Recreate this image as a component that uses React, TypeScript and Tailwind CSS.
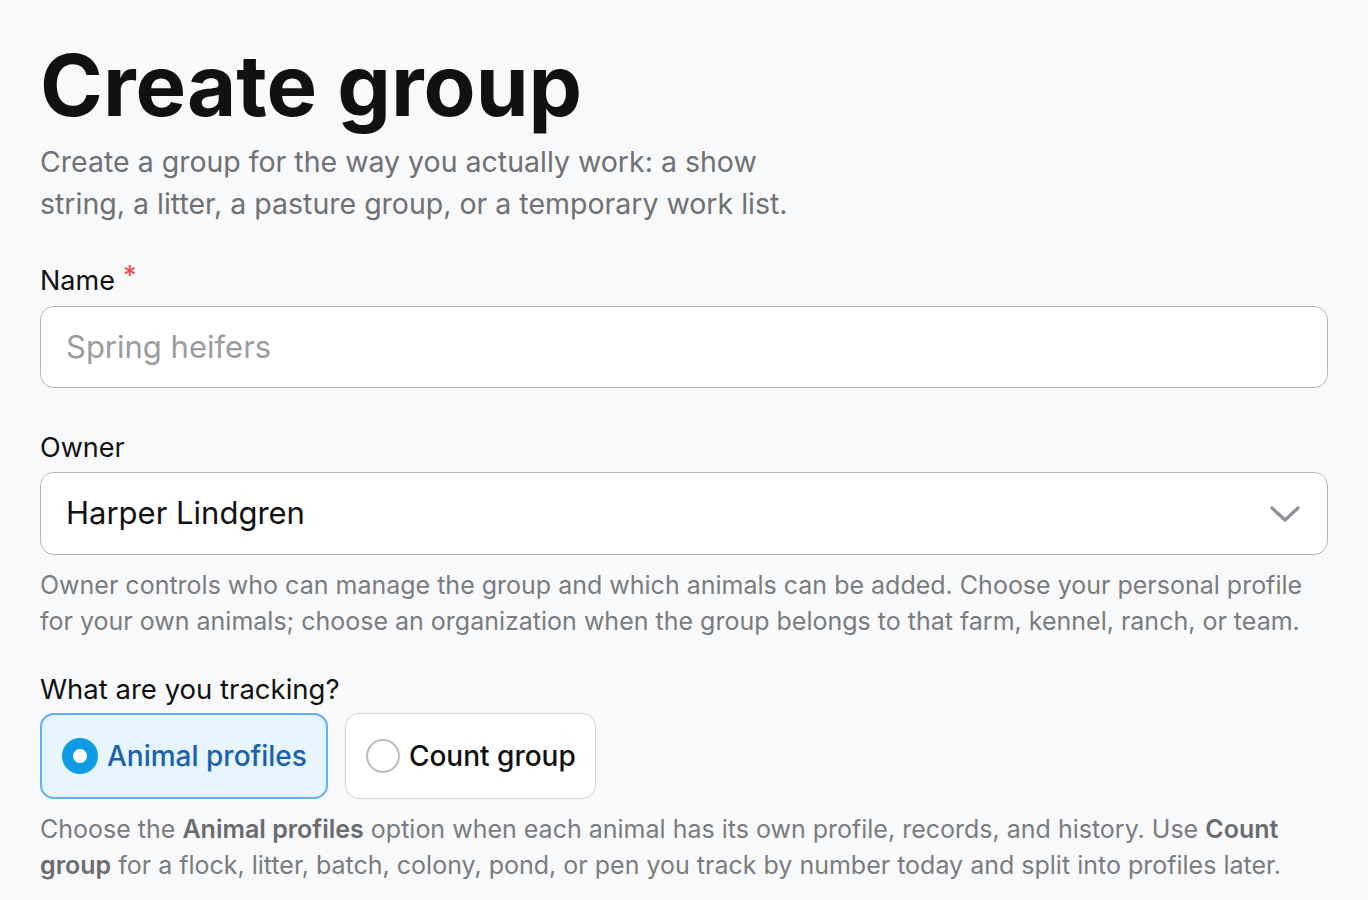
import React from "react";

export default function App() {
  return (
    <div className="min-h-[900px] w-full bg-[#f8f9fb] text-[#111111]" style={{ fontFamily: "Inter, 'Noto Sans', sans-serif" }}>
      <div className="px-10 pt-[43px]">
        <h1 className="text-[85px] font-bold leading-none tracking-[0em] text-[#111111]">Create group</h1>
        <p className="mt-[13px] max-w-[780px] text-[28.5px] leading-[42px] text-[#6f7175]">
          Create a group for the way you actually work: a show string, a litter, a pasture group, or a temporary work list.
        </p>

        <div className="mt-[38px]">
          <label className="flex items-start text-[27px] leading-[36px] text-[#111111]">
            Name<span className="ml-[8px] text-[27px] leading-[26px] text-[#f04848]">*</span>
          </label>
          <div className="mt-[7px] flex h-[82px] items-center rounded-[14px] border-[1.5px] border-[#b4b6b9] bg-white px-[25px]">
            <span className="text-[31px] text-[#9a9c9f]">Spring heifers</span>
          </div>
        </div>

        <div className="mt-[42px]">
          <label className="block text-[27px] leading-[36px] text-[#111111]">Owner</label>
          <div className="mt-[6px] flex h-[83px] items-center justify-between rounded-[14px] border-[1.5px] border-[#b4b6b9] bg-white pl-[25px] pr-[26px]">
            <span className="text-[31px] text-[#111111]">Harper Lindgren</span>
            <svg width="32" height="20" viewBox="0 0 32 20" fill="none">
              <path d="M3 4 L16 16 L29 4" stroke="#8c8f93" strokeWidth="3.2" strokeLinecap="round" strokeLinejoin="round" />
            </svg>
          </div>
          <p className="mt-[12px] text-[25px] leading-[36px] text-[#7a7c80]">
            Owner controls who can manage the group and which animals can be added. Choose your personal profile for your own animals; choose an organization when the group belongs to that farm, kennel, ranch, or team.
          </p>
        </div>

        <div className="mt-[32px]">
          <label className="block text-[27.5px] leading-[36px] text-[#111111]">What are you tracking?</label>
          <div className="mt-[6px] flex gap-[17px]">
            <div className="flex h-[86px] items-center gap-[9px] rounded-[14px] border-2 border-[#5fb0f2] bg-[#e8f4fe] pl-[20px] pr-[19px]">
              <span className="flex h-[36px] w-[36px] items-center justify-center rounded-full bg-[#0d9ce3]">
                <span className="h-[14px] w-[14px] rounded-full bg-white" />
              </span>
              <span className="text-[28px] font-medium text-[#1662ae]">Animal profiles</span>
            </div>
            <div className="flex h-[86px] items-center gap-[9px] rounded-[14px] border-[1.5px] border-[#d2d4d7] bg-white pl-[20px] pr-[19px]">
              <span className="h-[34px] w-[34px] rounded-full border-2 border-[#bcbec1] bg-white" />
              <span className="text-[28px] font-medium text-[#111111]">Count group</span>
            </div>
          </div>
          <p className="mt-[12px] text-[25px] leading-[36px] text-[#7a7c80]">
            Choose the <span className="font-semibold text-[#6a6c70]">Animal profiles</span> option when each animal has its own profile, records, and history. Use <span className="font-semibold text-[#6a6c70]">Count group</span> for a flock, litter, batch, colony, pond, or pen you track by number today and split into profiles later.
          </p>
        </div>
      </div>
    </div>
  );
}
